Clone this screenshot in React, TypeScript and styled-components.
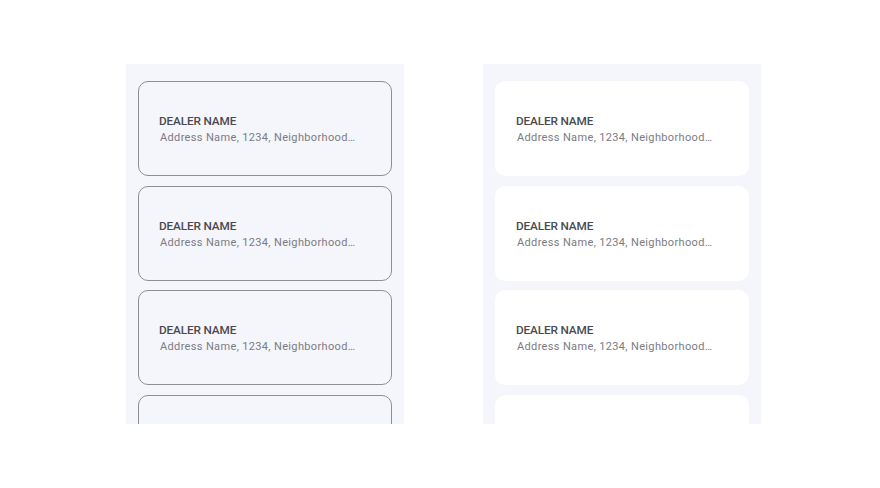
import React from 'react';
import styled, { createGlobalStyle } from 'styled-components';

const GlobalStyle = createGlobalStyle`
  body {
    margin: 0;
    background: #ffffff;
    font-family: Roboto, "Liberation Sans", sans-serif;
  }
`;

const Page = styled.div`
  display: flex;
  align-items: flex-start;
  gap: 79px;
  padding: 64px 0 0 126px;
`;

const Column = styled.div`
  width: 278px;
  height: 360px;
  box-sizing: border-box;
  padding: 17px 12px 0;
  background: #f5f6fb;
  overflow: hidden;
  display: flex;
  flex-direction: column;
  gap: 9.5px;
`;

const Card = styled.div<{ $outlined?: boolean }>`
  flex: 0 0 auto;
  height: 95px;
  box-sizing: border-box;
  border-radius: 10px;
  padding: 2px 20px 0;
  display: flex;
  flex-direction: column;
  justify-content: center;
  gap: 1px;
  background: ${(p) => (p.$outlined ? '#f5f6fb' : '#ffffff')};
  border: ${(p) => (p.$outlined ? '1px solid #8e8e93' : '1px solid transparent')};
`;

const DealerName = styled.div`
  font-size: 11.8px;
  font-weight: 500;
  color: #4a4a50;
  letter-spacing: -0.15px;
  line-height: 16px;
`;

const Address = styled.div`
  font-size: 11px;
  color: #7b7b84;
  letter-spacing: 0.35px;
  line-height: 16px;
  margin-left: 1px;
  white-space: nowrap;
`;

type Dealer = { id: number; name: string; address: string };

const dealers: Dealer[] = [1, 2, 3].map((id) => ({
  id,
  name: 'DEALER NAME',
  address: 'Address Name, 1234, Neighborhood…',
}));

const DealerList: React.FC<{ outlined?: boolean }> = ({ outlined }) => (
  <Column>
    {dealers.map((d) => (
      <Card key={d.id} $outlined={outlined}>
        <DealerName>{d.name}</DealerName>
        <Address>{d.address}</Address>
      </Card>
    ))}
    {/* next card peeking below the fold */}
    <Card $outlined={outlined} />
  </Column>
);

const App: React.FC = () => (
  <>
    <GlobalStyle />
    <Page>
      <DealerList outlined />
      <DealerList />
    </Page>
  </>
);

export default App;
